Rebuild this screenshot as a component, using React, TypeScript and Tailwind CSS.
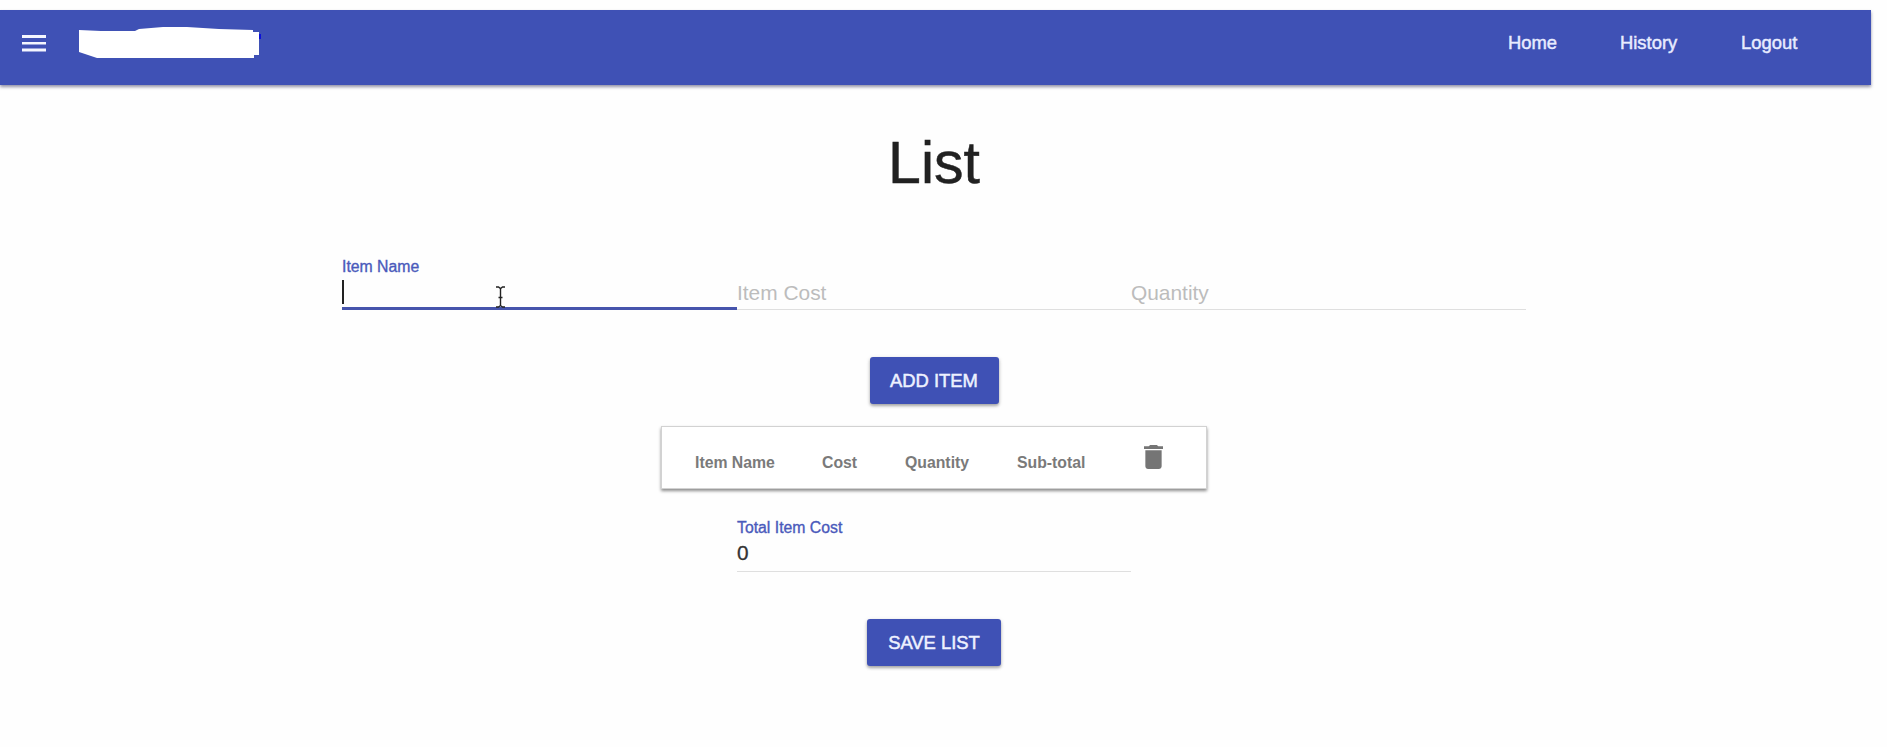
import React from "react";

const navLinks = [
  { label: "Home", className: "w-[112px]" },
  { label: "History", className: "w-[121px]" },
  { label: "Logout", className: "" },
];

function Header() {
  return (
    <header className="mt-[10px] flex h-[75px] w-[1871px] bg-[#3f51b5] pl-[22px] shadow-[0_2px_3px_rgba(40,40,80,0.5)]">
      <div className="flex h-[67px] flex-1 items-center">
        <svg width="24" height="17" viewBox="0 0 24 17" className="mt-[-1px] shrink-0" fill="#f4f6ff">
          <path d="M0 0h24v3H0zM0 7h24v2.6H0zM0 13.6h24v2.8H0z" />
        </svg>
        <svg width="184" height="34" viewBox="0 0 184 34" className="ml-[33px] mt-[-2px] shrink-0">
          <path d="M180 8h2v5h-2z" fill="#0b10d8" />
          <path
            d="M0 4L22 5H56L60 3L84 1H108L140 3L174 4V6H180V29H175V32H18L12 30L0 26Z"
            fill="#ffffff"
          />
        </svg>
      </div>
      <nav className="flex h-[66px] w-[363px] items-center text-[18.4px] leading-[24px] text-[#e8ecff] [-webkit-text-stroke:0.45px_#e8ecff]">
        {navLinks.map((link) => (
          <a key={link.label} className={link.className}>
            {link.label}
          </a>
        ))}
      </nav>
    </header>
  );
}

function RaisedButton({ children, className }: { children: React.ReactNode; className: string }) {
  return (
    <button
      className={`${className} flex h-[47px] items-center justify-center rounded-[3px] bg-[#3f51b5] pt-px text-[18.4px] leading-[24px] text-[#eef1ff] shadow-[0_2px_3px_rgba(0,0,0,0.3),0_1px_5px_rgba(0,0,0,0.1)] [-webkit-text-stroke:0.5px_#eef1ff]`}
    >
      {children}
    </button>
  );
}

function TextCursor() {
  return (
    <svg
      width="11"
      height="22"
      viewBox="0 0 11 22"
      className="absolute left-[153px] top-[33px]"
      fill="none"
      stroke="#222"
      strokeWidth="1.4"
    >
      <path d="M1 1H3.5L5.5 2.5L7.5 1H10M5.5 2.5V19.5M1 21H3.5L5.5 19.5L7.5 21H10M3.5 11.5H7.5" />
    </svg>
  );
}

function ItemFields() {
  return (
    <div className="mt-[60px] flex h-[57px] w-[1184px]">
      <div className="relative flex w-[395px] flex-col border-b-[3px] border-[#4654ac]">
        <label className="mt-[3px] text-[15.8px] leading-[22px] text-[#4a5abb] [-webkit-text-stroke:0.35px_#4a5abb]">
          Item Name
        </label>
        <div className="mt-[2px] h-[24px] w-[1.5px] bg-[#222]" />
        <TextCursor />
      </div>
      <div className="flex w-[394px] items-end border-b border-[#dfdfdf] pb-[4px] text-[20.9px] leading-[24px] text-[#bcbcbc]">
        Item Cost
      </div>
      <div className="flex w-[395px] items-end border-b border-[#dfdfdf] pb-[4px] text-[20.9px] leading-[24px] text-[#bcbcbc]">
        Quantity
      </div>
    </div>
  );
}

function ItemTable() {
  return (
    <div className="mt-[22px] flex h-[63px] w-[546px] border border-[#d2d2d2] bg-white pl-[33px] text-[15.8px] font-bold leading-[22px] text-[#7a7a7a] shadow-[0_2px_3px_rgba(0,0,0,0.45)]">
      <span className="mt-[25px] w-[127px]">Item Name</span>
      <span className="mt-[25px] w-[83px]">Cost</span>
      <span className="mt-[25px] w-[112px]">Quantity</span>
      <span className="mt-[25px] w-[127px]">Sub-total</span>
      <svg width="19" height="24" viewBox="5 3 14 18" preserveAspectRatio="none" className="mt-[18px]" fill="#757575">
        <path d="M6 19c0 1.1.9 2 2 2h8c1.1 0 2-.9 2-2V7H6v12zM19 4h-3.5l-1-1h-5l-1 1H5v2h14V4z" />
      </svg>
    </div>
  );
}

export default function App() {
  return (
    <div className="flex h-[747px] w-[1887px] flex-col overflow-hidden bg-[#fefefe] font-['Liberation_Sans',Arial,sans-serif]">
      <Header />
      <main className="flex w-[1868px] flex-col items-center">
        <h1 className="mt-[48px] text-[59px] leading-[60px] text-[#212121] [-webkit-text-stroke:0.5px_#212121]">List</h1>
        <ItemFields />
        <RaisedButton className="mt-[47px] w-[129px]">ADD ITEM</RaisedButton>
        <ItemTable />
        <div className="mt-[28px] flex h-[55px] w-[394px] flex-col border-b border-[#dfdfdf]">
          <label className="text-[15.8px] leading-[22px] text-[#4a5abb] [-webkit-text-stroke:0.35px_#4a5abb]">
            Total Item Cost
          </label>
          <span className="mt-[2px] text-[20.8px] leading-[24px] text-[#333] [-webkit-text-stroke:0.3px_#333]">
            0
          </span>
        </div>
        <RaisedButton className="mt-[47px] w-[134px]">SAVE LIST</RaisedButton>
      </main>
    </div>
  );
}
